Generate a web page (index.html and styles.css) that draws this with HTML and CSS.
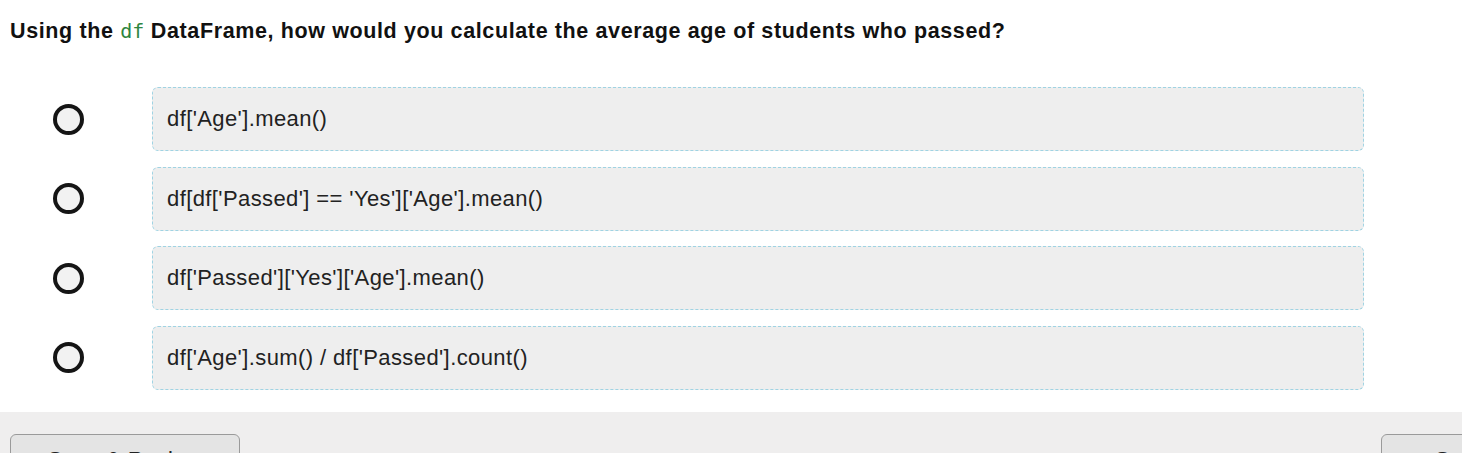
FILE: index.html
```html
<!DOCTYPE html>
<html>
<head>
<meta charset="utf-8">
<link rel="stylesheet" href="styles.css">
</head>
<body>
<div class="quiz">
  <h1 class="question">Using the <code class="inline-code">df</code> DataFrame, how would you calculate the average age of students who passed?</h1>
  <div class="options">
    <label class="option"><span class="radio"></span><span class="choice">df['Age'].mean()</span></label>
    <label class="option"><span class="radio"></span><span class="choice">df[df['Passed'] == 'Yes']['Age'].mean()</span></label>
    <label class="option"><span class="radio"></span><span class="choice">df['Passed']['Yes']['Age'].mean()</span></label>
    <label class="option"><span class="radio"></span><span class="choice">df['Age'].sum() / df['Passed'].count()</span></label>
  </div>
</div>
<div class="footer">
  <button class="btn">Save &amp; Review</button>
  <button class="btn btn-right">Submit</button>
</div>
</body>
</html>
```

FILE: styles.css
```css
html, body {
  margin: 0;
  padding: 0;
  background: #ffffff;
  font-family: "Liberation Sans", Arial, sans-serif;
  overflow: hidden;
}
.quiz {
  padding: 17px 10px 0 10px;
  height: 412px;
  box-sizing: border-box;
}
.question {
  margin: 0;
  font-size: 21.5px;
  font-weight: bold;
  letter-spacing: 0.62px;
  line-height: 28px;
  color: #111;
}
.inline-code {
  font-family: "DejaVu Sans Mono", monospace;
  font-weight: normal;
  font-size: 20px;
  letter-spacing: 0;
  color: #2e8540;
}
.options {
  display: flex;
  flex-direction: column;
  gap: 15.6px;
  margin-top: 42px;
}
.option {
  display: flex;
  align-items: center;
  height: 64px;
}
.radio {
  width: 23px;
  height: 23px;
  border: 4px solid #151515;
  border-radius: 50%;
  background: #f2f2f2;
  margin-left: 43px;
  flex: none;
}
.choice {
  margin-left: 68px;
  width: 1212px;
  height: 64px;
  box-sizing: border-box;
  border: 1px dashed #9fd3e3;
  border-radius: 6px;
  background: #eeeeee;
  display: flex;
  align-items: center;
  padding-left: 14px;
  font-size: 22px;
  letter-spacing: 0.4px;
  color: #222;
}
.footer {
  background: #efeeee;
  height: 41px;
  padding: 22px 10px 0 10px;
  box-sizing: border-box;
  display: flex;
  justify-content: space-between;
}
.btn {
  width: 230px;
  height: 44px;
  border: 1px solid #9a9a9a;
  border-radius: 6px;
  background: #e4e4e4;
  font-family: "Liberation Sans", Arial, sans-serif;
  font-size: 22px;
  line-height: 25px;
  letter-spacing: 0.4px;
  color: #222;
  padding: 6px 0 0 0;
  text-align: center;
  align-self: flex-start;
  flex: none;
}
.btn-right {
  margin-right: -159px;
  text-align: left;
  padding-left: 53px;
}
```
